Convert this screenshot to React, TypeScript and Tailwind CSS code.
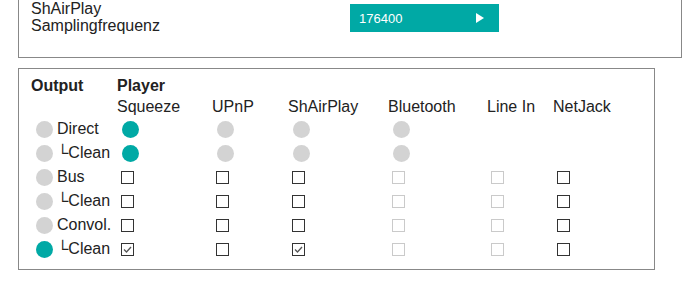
const COLS = 'grid grid-cols-[26px_60px_95px_76px_100px_99px_66px_60px]';

type Cell = 'on' | 'off' | 'box' | 'chk' | 'dis' | 'none';

const ROWS: { dot: boolean; label: string; sub?: boolean; cells: Cell[] }[] = [
  { dot: false, label: 'Direct', cells: ['on', 'off', 'off', 'off', 'none', 'none'] },
  { dot: false, label: 'Clean', sub: true, cells: ['on', 'off', 'off', 'off', 'none', 'none'] },
  { dot: false, label: 'Bus', cells: ['box', 'box', 'box', 'dis', 'dis', 'box'] },
  { dot: false, label: 'Clean', sub: true, cells: ['box', 'box', 'box', 'dis', 'dis', 'box'] },
  { dot: false, label: 'Convol.', cells: ['box', 'box', 'box', 'dis', 'dis', 'box'] },
  { dot: true, label: 'Clean', sub: true, cells: ['chk', 'box', 'chk', 'dis', 'dis', 'box'] },
];

function Dot({ on, className = '' }: { on: boolean; className?: string }) {
  return (
    <span
      className={`block w-[17px] h-[17px] rounded-full ${on ? 'bg-[#00a9a5]' : 'bg-[#d3d3d3]'} ${className}`}
    />
  );
}

function Box({ kind }: { kind: Cell }) {
  if (kind === 'none') return <span />;
  if (kind === 'on' || kind === 'off') return <Dot on={kind === 'on'} className="ml-[5px]" />;
  const dis = kind === 'dis';
  return (
    <span
      className={`ml-[4px] block w-[13px] h-[13px] border bg-white ${dis ? 'border-[#cacaca]' : 'border-[#333]'}`}
    >
      {kind === 'chk' && (
        <svg width="11" height="11" viewBox="0 0 11 11" className="block">
          <path d="M2 5.5 L4.5 8 L9 3" fill="none" stroke="#555" strokeWidth="1.3" />
        </svg>
      )}
    </span>
  );
}

export default function App() {
  return (
    <div className="w-[697px] h-[289px] overflow-hidden bg-white font-['Liberation_Sans',Arial,sans-serif] text-[16px] text-[#222]">
      <div className="ml-[18px] w-[664px] h-[58px] border-x border-b border-[#888] flex">
        <div className="pl-[12px] w-[331px] leading-[17px]">
          <div>ShAirPlay</div>
          <div>Samplingfrequenz</div>
        </div>
        <button className="mt-[4px] w-[149px] h-[28px] bg-[#00a9a5] text-white flex items-center justify-between pl-[9px] pr-[15px]">
          <span className="text-[13px] leading-none">176400</span>
          <svg width="8" height="10" viewBox="0 0 8 10">
            <path d="M0 0 L8 5 L0 10 Z" fill="white" />
          </svg>
        </button>
      </div>

      <div className="mt-[10px] ml-[18px] w-[637px] h-[202px] border border-[#888] pt-[6px] pl-[12px]">
        <div className={`${COLS} h-[22px] leading-[22px] font-bold`}>
          <div className="col-span-2">Output</div>
          <div className="col-span-6">Player</div>
        </div>
        <div className={`${COLS} h-[20px] leading-[20px]`}>
          <div className="col-span-2" />
          <div>Squeeze</div>
          <div>UPnP</div>
          <div>ShAirPlay</div>
          <div>Bluetooth</div>
          <div>Line In</div>
          <div>NetJack</div>
        </div>
        {ROWS.map((r, i) => (
          <div key={i} className={`${COLS} h-[24px] items-center`}>
            <Dot on={r.dot} className="ml-[5px]" />
            <div className="leading-[20px] whitespace-nowrap">
              {r.sub ? '└' : ''}
              {r.label}
            </div>
            {r.cells.map((c, j) => (
              <div key={j} className="flex items-center">
                <Box kind={c} />
              </div>
            ))}
          </div>
        ))}
      </div>
    </div>
  );
}
